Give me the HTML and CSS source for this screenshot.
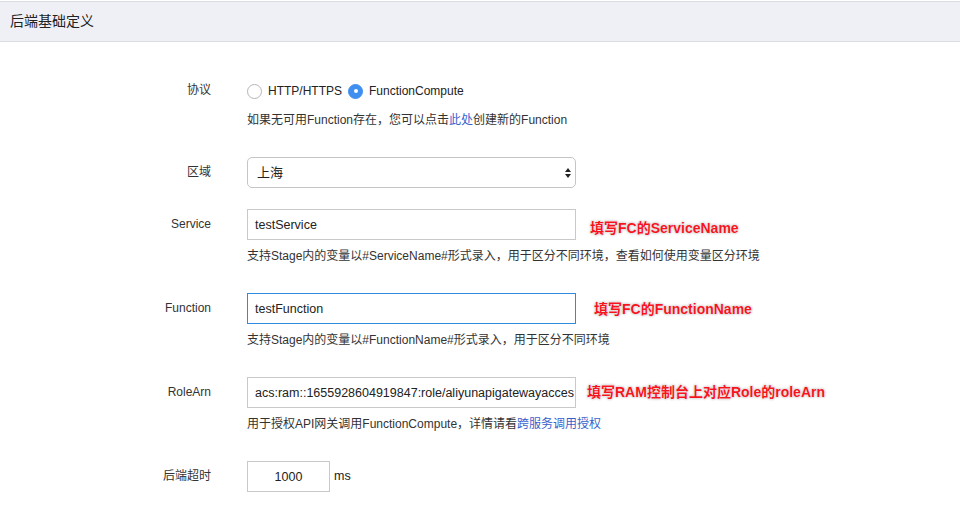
FILE: index.html
```html
<!DOCTYPE html>
<html lang="zh-CN">
<head>
<meta charset="utf-8">
<title>后端基础定义</title>
<link rel="stylesheet" href="styles.css">
</head>
<body>
<div class="panel-head">后端基础定义</div>
<form class="form">
  <div class="group group-radio">
    <label class="label">协议</label>
    <div class="ctrl">
      <div class="radios">
        <span class="radio"><span class="dot"></span>HTTP/HTTPS</span>
        <span class="radio checked"><span class="dot"></span>FunctionCompute</span>
      </div>
      <p class="help help-first">如果无可用Function存在，您可以点击<a class="link">此处</a>创建新的Function</p>
    </div>
  </div>

  <div class="group">
    <label class="label">区域</label>
    <div class="ctrl">
      <div class="select">上海<span class="arrows"><span class="up"></span><span class="down"></span></span></div>
    </div>
  </div>

  <div class="group">
    <label class="label">Service</label>
    <div class="ctrl">
      <div class="line">
        <div class="input">testService</div>
        <span class="note note-service">填写FC的ServiceName</span>
      </div>
      <p class="help">支持Stage内的变量以#ServiceName#形式录入，用于区分不同环境，查看如何使用变量区分环境</p>
    </div>
  </div>

  <div class="group">
    <label class="label">Function</label>
    <div class="ctrl">
      <div class="line">
        <div class="input input-focus">testFunction</div>
        <span class="note note-function">填写FC的FunctionName</span>
      </div>
      <p class="help">支持Stage内的变量以#FunctionName#形式录入，用于区分不同环境</p>
    </div>
  </div>

  <div class="group">
    <label class="label">RoleArn</label>
    <div class="ctrl">
      <div class="line">
        <div class="input">acs:ram::1655928604919847:role/aliyunapigatewayacces</div>
        <span class="note note-role">填写RAM控制台上对应Role的roleArn</span>
      </div>
      <p class="help">用于授权API网关调用FunctionCompute，详情请看<a class="link">跨服务调用授权</a></p>
    </div>
  </div>

  <div class="group">
    <label class="label">后端超时</label>
    <div class="ctrl">
      <div class="line">
        <div class="input small">1000</div>
        <span class="unit">ms</span>
      </div>
    </div>
  </div>
</form>
</body>
</html>
```

FILE: styles.css
```css
* { box-sizing: border-box; }
html, body { margin: 0; padding: 0; background: #fff; }
body {
  font-family: "Liberation Sans", "Noto Sans CJK SC", sans-serif;
  color: #333;
  font-size: 12px;
  padding-top: 1px;
}
.panel-head {
  height: 41px;
  line-height: 39px;
  background: #eff0f5;
  border-top: 1px solid #dcdde2;
  border-bottom: 1px solid #dcdde2;
  padding-left: 10px;
  font-size: 14px;
  color: #222;
}
.form {
  padding-top: 39px;
  margin: 0;
}
.group {
  display: grid;
  grid-template-columns: 211px 1fr;
  column-gap: 36px;
  margin-bottom: 21px;
}
.label {
  text-align: right;
  line-height: 31px;
  height: 31px;
  color: #333;
}
.group-radio .label { line-height: 18px; height: 18px; }
.ctrl { display: flex; flex-direction: column; align-items: flex-start; }
.radios { display: flex; align-items: center; height: 20px; font-size: 12px; color: #222; }
.radio { display: inline-flex; align-items: center; margin-right: 6px; }
.dot {
  width: 15px; height: 15px; border-radius: 50%;
  border: 1px solid #b5b5b5; background: #fff;
  margin-right: 6px; position: relative;
}
.radio.checked .dot { background: #3f8ff0; border-color: #3f8ff0; }
.radio.checked .dot::after {
  content: ""; position: absolute; left: 4.5px; top: 4.5px;
  width: 4px; height: 4px; border-radius: 50%; background: #fff;
}
.help { margin: 7px 0 7px; line-height: 18px; color: #333; font-size: 12px; }
.help-first { margin-top: 10px; }
.link { color: #3a5fcd; text-decoration: none; }
.line { display: flex; align-items: center; }
.input {
  width: 329px; height: 31px; line-height: 29px;
  border: 1px solid #c9c9c9; padding: 1px 7px 0;
  font-size: 12.5px; color: #222; background: #fff;
  white-space: nowrap; overflow: hidden;
}
.input.input-focus { border: 1px solid #2f8ae0; }
.input.small { width: 83px; text-align: center; padding: 1px 0 0; }
.select {
  width: 329px; height: 31px; line-height: 29px;
  border: 1px solid #c5c5c5; border-radius: 5px;
  padding: 0 9px; font-size: 13px; color: #222;
  position: relative;
}
.arrows { position: absolute; right: 4px; top: 10px; display: flex; flex-direction: column; gap: 2px; }
.up, .down { width: 0; height: 0; border-left: 3px solid transparent; border-right: 3px solid transparent; }
.up { border-bottom: 4px solid #222; }
.down { border-top: 4px solid #222; }
.note {
  font-size: 14px; font-weight: bold; color: #f5141e;
  text-shadow: 0 0 2px #fff, 0 0 1px #fff, 0 0 3px #bbb, 0 0 2px #999;
  white-space: nowrap;
}
.note-service { margin-left: 14px; margin-top: 4px; }
.note-function { margin-left: 18px; margin-top: -2px; }
.note-role { margin-left: 11px; margin-top: -3px; }
.unit { margin-left: 4px; margin-top: -2px; font-size: 12.5px; color: #222; }
```
